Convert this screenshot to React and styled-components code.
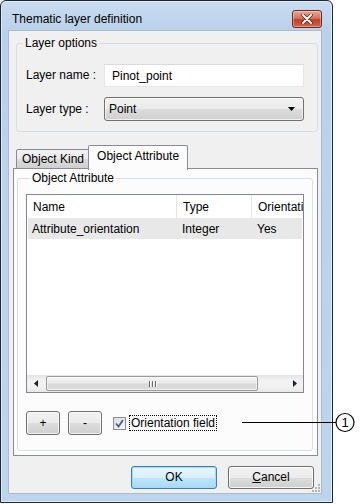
import React from "react";
import styled, { createGlobalStyle } from "styled-components";

const GlobalStyle = createGlobalStyle`
  html, body { margin: 0; padding: 0; background: #fff; }
  body {
    font-family: "Liberation Sans", Arial, sans-serif;
    font-size: 12px;
    color: #000;
  }
  * { box-sizing: border-box; }
`;

const Stage = styled.div`
  position: relative;
  width: 360px;
  height: 504px;
  overflow: hidden;
`;

const Window = styled.div`
  width: 333px;
  height: 503px;
  border: 1px solid #1e2834;
  border-radius: 6px 6px 0 0;
  background: linear-gradient(#c9dcf0, #b9d1ea 30px, #bcd4ec);
  box-shadow: inset 0 0 0 1px #e2ecf7;
  padding: 0 10px 8px 7px;
  display: flex;
  flex-direction: column;
`;

const TitleBar = styled.div`
  height: 29px;
  padding: 6px 0 0 4px;
  display: flex;
  align-items: center;
  justify-content: space-between;
  color: #000;
`;

const CloseButton = styled.div`
  width: 30px;
  height: 18px;
  border: 1px solid #6b2b20;
  border-radius: 3px;
  background: linear-gradient(#e8a493, #d47560 45%, #c13f27 55%, #d0654b);
  box-shadow: inset 0 0 0 1px rgba(255, 255, 255, 0.35);
  display: flex;
  align-items: center;
  justify-content: center;
  margin-top: 1px;
`;

const Client = styled.div`
  position: relative;
  flex: 1;
  background: #f0f0f0;
  border: 1px solid #a7bbd3;
  display: flex;
  flex-direction: column;
`;

const Group = styled.fieldset`
  margin: ${(p) => p.$margin};
  padding: ${(p) => p.$padding};
  border: 1px solid #d5dfe5;
  border-radius: 3px;
  min-inline-size: 0;
`;

const Legend = styled.legend`
  padding: 0 2px;
  margin-left: ${(p) => p.$offset || "0"};
  line-height: 15px;
  color: #000;
`;

const FieldGrid = styled.div`
  display: grid;
  grid-template-columns: 78px 200px;
  row-gap: 10px;
  align-items: center;
`;

const FieldLabel = styled.label`
  line-height: 15px;
`;

const TextInput = styled.div`
  height: 23px;
  background: #fff;
  border: 1px solid #e2e8ee;
  border-top-color: #d6dce3;
  padding: 0 7px;
  display: flex;
  align-items: center;
`;

const Combo = styled.div`
  height: 24px;
  border: 1px solid #707070;
  border-radius: 3px;
  background: linear-gradient(#f2f2f2, #ebebeb 50%, #dddddd 50%, #cfcfcf);
  box-shadow: inset 0 0 0 1px rgba(255, 255, 255, 0.7);
  padding: 0 8px 0 4px;
  display: flex;
  align-items: center;
  justify-content: space-between;
`;

const TabStrip = styled.div`
  display: flex;
  align-items: flex-end;
  height: 24px;
  margin: 13px 0 0 7px;
`;

const Tab = styled.div`
  position: relative;
  height: ${(p) => (p.$active ? "25px" : "20px")};
  margin-left: ${(p) => (p.$active ? "-2px" : "0")};
  margin-bottom: ${(p) => (p.$active ? "-1px" : "0")};
  z-index: ${(p) => (p.$active ? 2 : 1)};
  padding: ${(p) => (p.$active ? "2px 8px 0 8px" : "1px 5px 0 5px")};
  border: 1px solid #898c95;
  border-bottom: ${(p) => (p.$active ? "none" : "1px solid #898c95")};
  border-radius: 2px 2px 0 0;
  background: ${(p) =>
    p.$active ? "#fcfcfc" : "linear-gradient(#f2f2f2, #ebebeb 50%, #dddddd 50%, #cfcfcf)"};
  display: flex;
  align-items: ${(p) => (p.$active ? "flex-start" : "center")};
  line-height: 17px;
`;

const TabPanel = styled.div`
  margin: -1px 3px 0 4px;
  height: 288px;
  border: 1px solid #898c95;
  background: #fcfcfc;
  padding: 1px 4px 4px 3px;
  display: flex;
`;

const InnerGroup = styled(Group)`
  flex: 1;
  display: flex;
  flex-direction: column;
`;

const ListView = styled.div`
  height: 199px;
  border: 1px solid #828790;
  background: #fff;
  display: flex;
  flex-direction: column;
  overflow: hidden;
`;

const Columns = styled.div`
  display: grid;
  grid-template-columns: 150px 75px 80px;
  height: ${(p) => (p.$header ? "23px" : "21px")};
  background: ${(p) => (p.$header ? "#fff" : "#e8e8e8")};
  margin: ${(p) => (p.$header ? "0" : "0 1px")};
  white-space: nowrap;
`;

const Cell = styled.div`
  display: flex;
  align-items: center;
  padding-left: ${(p) => (p.$header ? "6px" : "4px")};
  border-right: ${(p) => (p.$header ? "1px solid #e5e5e5" : "none")};
  overflow: hidden;
`;

const ScrollBar = styled.div`
  margin-top: auto;
  height: 17px;
  display: flex;
  background: linear-gradient(#e3e3e3, #f2f2f2 30%, #f2f2f2 70%, #e8e8e8);
`;

const ScrollArrow = styled.div`
  width: 17px;
  display: flex;
  align-items: center;
  justify-content: center;
`;

const Track = styled.div`
  flex: 1;
  display: flex;
  padding: 1px 17px 1px 2px;
`;

const Thumb = styled.div`
  width: 212px;
  border: 1px solid #9b9b9b;
  border-radius: 2px;
  background: linear-gradient(#f4f4f4, #e9e9e9 45%, #d8d8d8 55%, #dcdcdc);
  box-shadow: inset 0 0 0 1px rgba(255, 255, 255, 0.6);
  display: flex;
  align-items: center;
  justify-content: center;
  gap: 2px;
`;

const Grip = styled.span`
  width: 1px;
  height: 6px;
  background: #6b6b6b;
  box-shadow: 1px 0 0 #fff;
`;

const ActionRow = styled.div`
  display: flex;
  align-items: center;
  margin-top: 18px;
  gap: 8px;
`;

const Button = styled.div`
  width: ${(p) => p.$w};
  height: ${(p) => p.$h};
  border: 1px solid ${(p) => (p.$default ? "#3c7fb1" : "#707070")};
  border-radius: 3px;
  background: ${(p) =>
    p.$default
      ? "linear-gradient(#eaf6fd, #d9f0fc 50%, #bee6fd 50%, #a7d9f5)"
      : "linear-gradient(#f2f2f2, #ebebeb 50%, #dddddd 50%, #cfcfcf)"};
  box-shadow: inset 0 0 0 1px ${(p) => (p.$default ? "#a4d9f7" : "rgba(255,255,255,0.75)")};
  display: flex;
  align-items: center;
  justify-content: center;
  line-height: 15px;
`;

const CheckWrap = styled.div`
  display: flex;
  align-items: center;
  gap: 3px;
  margin-left: 3px;
`;

const CheckBox = styled.div`
  width: 13px;
  height: 13px;
  border: 1px solid #8f8f8f;
  background: linear-gradient(135deg, #dcdcdc, #fafafa);
  display: flex;
  align-items: center;
  justify-content: center;
`;

const FocusLabel = styled.span`
  border: 1px dotted #000;
  padding: 0 1px;
  line-height: 14px;
`;

const Footer = styled.div`
  display: flex;
  justify-content: flex-end;
  gap: 11px;
  margin-top: 10px;
  padding-right: 7px;
`;

const Underline = styled.span`
  text-decoration: underline;
`;

const SizeGrip = styled.svg`
  position: absolute;
  right: 1px;
  bottom: 1px;
`;

const Callout = styled.svg`
  position: absolute;
  left: 0;
  top: 0;
  pointer-events: none;
`;

const CalloutNumber = styled.text`
  font-family: "Liberation Sans", Arial, sans-serif;
  font-size: 13px;
`;

const Arrow = ({ dir }) => (
  <svg width="4" height="7" viewBox="0 0 4 7">
    {dir === "left" ? <path d="M4 0 L0 3.5 L4 7 Z" fill="#222" /> : <path d="M0 0 L4 3.5 L0 7 Z" fill="#222" />}
  </svg>
);

export default function App() {
  return (
    <Stage>
      <GlobalStyle />
      <Window>
        <TitleBar>
          <span>Thematic layer definition</span>
          <CloseButton>
            <svg width="12" height="10" viewBox="0 0 12 10">
              <path d="M2 1 L10 9 M10 1 L2 9" stroke="#5a1d14" strokeWidth="3.4" strokeLinecap="round" />
              <path d="M2 1 L10 9 M10 1 L2 9" stroke="#fff" strokeWidth="2" strokeLinecap="round" />
            </svg>
          </CloseButton>
        </TitleBar>
        <Client>
          <Group $margin="5px 3px 0 7px" $padding="13px 14px 10px 9px">
            <Legend $offset="-3px">Layer options</Legend>
            <FieldGrid>
              <FieldLabel>Layer name :</FieldLabel>
              <TextInput>Pinot_point</TextInput>
              <FieldLabel>Layer type :</FieldLabel>
              <Combo>
                <span>Point</span>
                <svg width="7" height="4" viewBox="0 0 7 4">
                  <path d="M0 0 L7 0 L3.5 4 Z" fill="#000" />
                </svg>
              </Combo>
            </FieldGrid>
          </Group>

          <TabStrip>
            <Tab>Object Kind</Tab>
            <Tab $active>Object Attribute</Tab>
          </TabStrip>
          <TabPanel>
            <InnerGroup $margin="1px 0 0 0" $padding="8px 8px 15px 8px">
              <Legend $offset="4px">Object Attribute</Legend>
              <ListView>
                <Columns $header>
                  <Cell $header>Name</Cell>
                  <Cell $header>Type</Cell>
                  <Cell $header>Orientation</Cell>
                </Columns>
                <Columns>
                  <Cell>Attribute_orientation</Cell>
                  <Cell>Integer</Cell>
                  <Cell>Yes</Cell>
                </Columns>
                <ScrollBar>
                  <ScrollArrow>
                    <Arrow dir="left" />
                  </ScrollArrow>
                  <Track>
                    <Thumb>
                      <Grip />
                      <Grip />
                      <Grip />
                    </Thumb>
                  </Track>
                  <ScrollArrow>
                    <Arrow dir="right" />
                  </ScrollArrow>
                </ScrollBar>
              </ListView>
              <ActionRow>
                <Button $w="34px" $h="24px">+</Button>
                <Button $w="34px" $h="24px">-</Button>
                <CheckWrap>
                  <CheckBox>
                    <svg width="9" height="9" viewBox="0 0 9 9">
                      <path d="M1 4.5 L3.5 7.5 L8 1" fill="none" stroke="#4a5e8c" strokeWidth="1.8" />
                    </svg>
                  </CheckBox>
                  <FocusLabel>Orientation field</FocusLabel>
                </CheckWrap>
              </ActionRow>
            </InnerGroup>
          </TabPanel>

          <Footer>
            <Button $w="86px" $h="23px" $default>OK</Button>
            <Button $w="86px" $h="23px">
              <span>
                <Underline>C</Underline>ancel
              </span>
            </Button>
          </Footer>
          <SizeGrip width="8" height="8" viewBox="0 0 8 8">
            <g fill="#b5b5b5">
              <rect x="6" y="0" width="2" height="2" />
              <rect x="3" y="3" width="2" height="2" />
              <rect x="6" y="3" width="2" height="2" />
              <rect x="0" y="6" width="2" height="2" />
              <rect x="3" y="6" width="2" height="2" />
              <rect x="6" y="6" width="2" height="2" />
            </g>
          </SizeGrip>
        </Client>
      </Window>
      <Callout width="360" height="504" viewBox="0 0 360 504">
        <line x1="242" y1="422.5" x2="336" y2="422.5" stroke="#000" strokeWidth="1" />
        <circle cx="345" cy="422.5" r="9" fill="#fff" stroke="#000" strokeWidth="1.2" />
        <CalloutNumber x="345" y="427" textAnchor="middle">1</CalloutNumber>
      </Callout>
    </Stage>
  );
}
